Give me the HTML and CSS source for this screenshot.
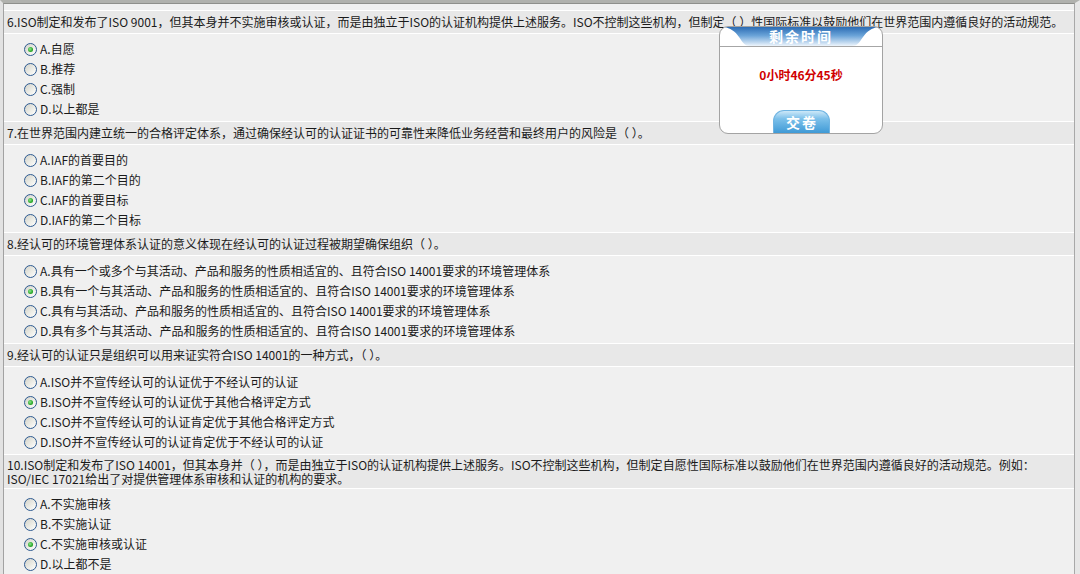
FILE: index.html
```html
<!DOCTYPE html>
<html lang="zh-CN">
<head>
    <meta charset="UTF-8">
    <title>在线考试</title>
    <link rel="stylesheet" href="styles.css">
</head>
<body>
    <div class="frame">
        <div class="paper">
            <div class="question">
                <div class="q-title">6.ISO制定和发布了ISO 9001，但其本身并不实施审核或认证，而是由独立于ISO的认证机构提供上述服务。ISO不控制这些机构，但制定（ ）性国际标准以鼓励他们在世界范围内遵循良好的活动规范。</div>
                <ul class="options">
                    <li><span class="radio checked"></span>A.自愿</li>
                    <li><span class="radio"></span>B.推荐</li>
                    <li><span class="radio"></span>C.强制</li>
                    <li><span class="radio"></span>D.以上都是</li>
                </ul>
            </div>
            <div class="question">
                <div class="q-title">7.在世界范围内建立统一的合格评定体系，通过确保经认可的认证证书的可靠性来降低业务经营和最终用户的风险是（ ）。</div>
                <ul class="options">
                    <li><span class="radio"></span>A.IAF的首要目的</li>
                    <li><span class="radio"></span>B.IAF的第二个目的</li>
                    <li><span class="radio checked"></span>C.IAF的首要目标</li>
                    <li><span class="radio"></span>D.IAF的第二个目标</li>
                </ul>
            </div>
            <div class="question">
                <div class="q-title">8.经认可的环境管理体系认证的意义体现在经认可的认证过程被期望确保组织（ ）。</div>
                <ul class="options">
                    <li><span class="radio"></span>A.具有一个或多个与其活动、产品和服务的性质相适宜的、且符合ISO 14001要求的环境管理体系</li>
                    <li><span class="radio checked"></span>B.具有一个与其活动、产品和服务的性质相适宜的、且符合ISO 14001要求的环境管理体系</li>
                    <li><span class="radio"></span>C.具有与其活动、产品和服务的性质相适宜的、且符合ISO 14001要求的环境管理体系</li>
                    <li><span class="radio"></span>D.具有多个与其活动、产品和服务的性质相适宜的、且符合ISO 14001要求的环境管理体系</li>
                </ul>
            </div>
            <div class="question">
                <div class="q-title">9.经认可的认证只是组织可以用来证实符合ISO 14001的一种方式，（ ）。</div>
                <ul class="options">
                    <li><span class="radio"></span>A.ISO并不宣传经认可的认证优于不经认可的认证</li>
                    <li><span class="radio checked"></span>B.ISO并不宣传经认可的认证优于其他合格评定方式</li>
                    <li><span class="radio"></span>C.ISO并不宣传经认可的认证肯定优于其他合格评定方式</li>
                    <li><span class="radio"></span>D.ISO并不宣传经认可的认证肯定优于不经认可的认证</li>
                </ul>
            </div>
            <div class="question">
                <div class="q-title two-line">10.ISO制定和发布了ISO 14001，但其本身并（ ），而是由独立于ISO的认证机构提供上述服务。ISO不控制这些机构，但制定自愿性国际标准以鼓励他们在世界范围内遵循良好的活动规范。例如：<br>ISO/IEC 17021给出了对提供管理体系审核和认证的机构的要求。</div>
                <ul class="options">
                    <li><span class="radio"></span>A.不实施审核</li>
                    <li><span class="radio"></span>B.不实施认证</li>
                    <li><span class="radio checked"></span>C.不实施审核或认证</li>
                    <li><span class="radio"></span>D.以上都不是</li>
                </ul>
            </div>
        </div>

        <!-- 浮动的计时框 -->
        <div class="timer">
            <svg class="timer-head" width="162" height="22" viewBox="0 0 162 22">
                <defs>
                    <linearGradient id="tabBlue" x1="0" y1="0" x2="0" y2="1">
                        <stop offset="0" stop-color="#2c6cb4"/>
                        <stop offset="0.45" stop-color="#6aa3d8"/>
                        <stop offset="1" stop-color="#eef5fc"/>
                    </linearGradient>
                </defs>
                <line x1="0" y1="19.5" x2="162" y2="19.5" stroke="#a6a6a6" stroke-width="1"/>
                <path d="M4,0 L158,0 C152,1 147,4 143,10 C139,16 137,19 132,19 L30,19 C25,19 23,16 19,10 C15,4 10,1 4,0 Z" fill="url(#tabBlue)"/>
                <text x="81" y="15" text-anchor="middle" class="timer-title">剩余时间</text>
            </svg>
            <div class="timer-time">0小时46分45秒</div>
            <button class="timer-submit">交卷</button>
        </div>
    </div>
</body>
</html>
```

FILE: styles.css
```css
html, body {
    margin: 0;
    padding: 0;
}

body {
    background-color: #f0f0f0;
    font-family: "Noto Sans CJK SC", "Noto Sans", sans-serif;
    font-size: 12px;
    color: #1a1a1a;
}

.frame {
    position: relative;
    height: 100vh;
    overflow: hidden;
    box-sizing: border-box;
    border-top: 3px solid #b0b1ad;
    border-left: 3px solid #e2e2e2;
    border-right: 5px solid #e6e6e6;
    display: flex;
}

.paper {
    flex: 1;
    border-top: 1px solid #8e8f8b;
    border-left: 1px solid #a2a2a2;
    border-right: 1px solid #a8a8a8;
    background-color: #f0f0f0;
    padding-top: 6px;
}

/* 题目标题栏 */
.q-title {
    background-color: #e8e8e8;
    border-top: 1px solid #ffffff;
    border-bottom: 1px solid #ffffff;
    padding: 4px 3px;
    line-height: 14px;
    white-space: nowrap;
}

.q-title.two-line {
    padding: 3px 3px 2px;
}

.options {
    list-style: none;
    margin: 0;
    padding: 5px 0 2px 20px;
}

.options li {
    display: flex;
    align-items: center;
    height: 20px;
    line-height: 20px;
}

/* 模拟 XP 风格的单选框 */
.radio {
    position: relative;
    flex: none;
    width: 13px;
    height: 13px;
    box-sizing: border-box;
    border: 1px solid #2d5a90;
    border-radius: 50%;
    background: linear-gradient(135deg, #d2d2ca 0%, #ececE6 55%, #ffffff 100%);
    margin-right: 3px;
}

.radio.checked::after {
    content: "";
    position: absolute;
    left: 3px;
    top: 3px;
    width: 5px;
    height: 5px;
    border-radius: 50%;
    background: radial-gradient(circle at 40% 40%, #8ee58e 0%, #2aa82a 60%, #1b8a1b 100%);
}

/* 计时框 */
.timer {
    position: absolute;
    left: 716px;
    top: 23px;
    width: 162px;
    height: 106px;
    background-color: #ffffff;
    border: 1px solid #a3a3a3;
    border-radius: 9px;
    display: flex;
    flex-direction: column;
    align-items: center;
    overflow: hidden;
}

.timer-head {
    display: block;
    flex: none;
}

.timer-title {
    fill: #ffffff;
    font-family: "Noto Sans CJK SC", sans-serif;
    font-size: 14px;
    font-weight: bold;
    letter-spacing: 2px;
}

.timer-time {
    margin-top: 19px;
    color: #d00000;
    font-weight: bold;
    font-size: 12px;
    line-height: 14px;
}

.timer-submit {
    margin-top: auto;
    width: 57px;
    height: 23px;
    border: 1px solid #6fb4e2;
    border-bottom: none;
    border-radius: 11px 11px 0 0;
    background: linear-gradient(to bottom, #cde8f8 0%, #7cc0ea 35%, #3f9ad6 100%);
    color: #ffffff;
    font-family: "Noto Sans CJK SC", sans-serif;
    font-size: 14px;
    font-weight: bold;
    letter-spacing: 2px;
    padding: 0 0 0 2px;
    cursor: pointer;
}
```
